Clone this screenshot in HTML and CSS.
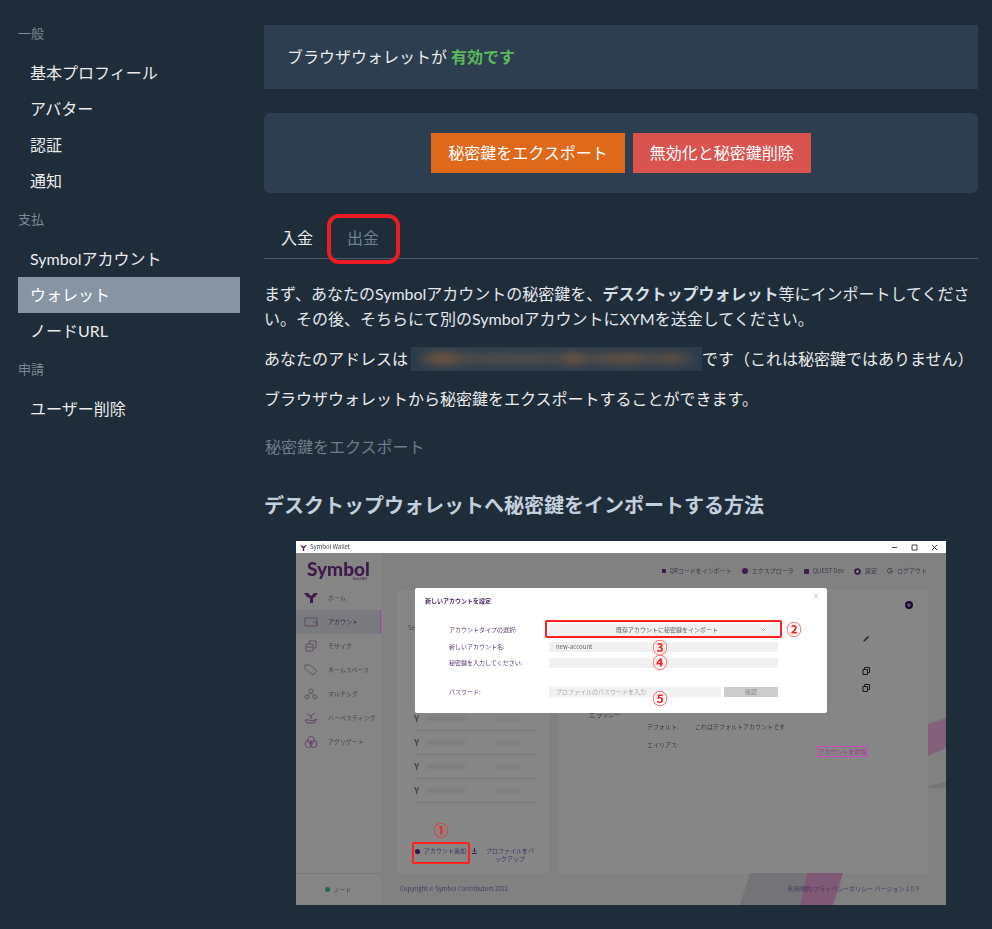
FILE: index.html
```html
<!DOCTYPE html>
<html lang="ja">
<head>
    <meta charset="UTF-8">
    <meta name="viewport" content="width=device-width, initial-scale=1.0">
    <title>ウォレット</title>
    <link rel="stylesheet" href="styles.css">
</head>
<body>
    <div class="page">
        <nav class="sidebar">
            <div class="nav-title">一般</div>
            <a class="nav-item">基本プロフィール</a>
            <a class="nav-item">アバター</a>
            <a class="nav-item">認証</a>
            <a class="nav-item">通知</a>
            <div class="nav-title">支払</div>
            <a class="nav-item">Symbolアカウント</a>
            <a class="nav-item active">ウォレット</a>
            <a class="nav-item">ノードURL</a>
            <div class="nav-title">申請</div>
            <a class="nav-item">ユーザー削除</a>
        </nav>

        <main class="content">
            <div class="panel status">ブラウザウォレットが <strong class="enabled">有効です</strong></div>
            <div class="panel actions">
                <button class="btn btn-orange">秘密鍵をエクスポート</button>
                <button class="btn btn-red">無効化と秘密鍵削除</button>
            </div>

            <div class="tabs">
                <a class="tab current">入金</a>
                <a class="tab marked">出金</a>
            </div>

            <p class="intro">まず、あなたのSymbolアカウントの秘密鍵を、<strong>デスクトップウォレット</strong>等にインポートしてください。その後、そちらにて別のSymbolアカウントにXYMを送金してください。</p>
            <p class="address-line">あなたのアドレスは<span class="address"><i></i></span>です（これは秘密鍵ではありません）</p>
            <p class="export-note">ブラウザウォレットから秘密鍵をエクスポートすることができます。</p>
            <a class="export-link">秘密鍵をエクスポート</a>

            <h2>デスクトップウォレットへ秘密鍵をインポートする方法</h2>

            <div class="shot">
                <div class="win-bar">
                    <span class="win-title"><svg width="7" height="7" viewBox="0 0 10 10"><path d="M0 1l3 1 2 2 2-2 3-1-3 4-1 1v4H4V6L3 5z" fill="#5a1a6a"/></svg>Symbol Wallet</span>
                    <span class="win-controls">
                        <svg width="7" height="7" viewBox="0 0 7 7"><path d="M1 3.5h5" stroke="#444"/></svg>
                        <svg width="7" height="7" viewBox="0 0 7 7"><path d="M1 1h5v5H1z" stroke="#444" fill="none"/></svg>
                        <svg width="7" height="7" viewBox="0 0 7 7"><path d="M1 1l5 5M6 1L1 6" stroke="#444"/></svg>
                    </span>
                </div>
                <div class="app">
                    <div class="app-side">
                        <div class="logo">Symbol<small>From NEM</small></div>
                        <div class="app-nav">
                            <div class="app-link"><svg width="14" height="12" viewBox="0 0 14 12"><path d="M0 1l4 0 3 3 3-3 4 0-3 4-2 1v5H6V6L3 5z" fill="#7a3590"/></svg>ホーム</div>
                            <div class="app-link on"><svg width="14" height="12" viewBox="0 0 14 12"><path d="M1 2h12v8H1zM9 6h4v3" stroke="#b090b8" fill="none"/></svg>アカウント</div>
                            <div class="app-link"><svg width="14" height="12" viewBox="0 0 14 12"><path d="M2 4h7v7H2zM2 7h7M5 4V1h7v7H9" stroke="#c090c8" fill="none"/></svg>モザイク</div>
                            <div class="app-link"><svg width="14" height="12" viewBox="0 0 14 12"><path d="M1 1h5l7 6-4 4-8-6z" stroke="#b8a8b8" fill="none"/></svg>ネームスペース</div>
                            <div class="app-link"><svg width="14" height="12" viewBox="0 0 14 12"><path d="M7 5L3 8M7 5l4 3" stroke="#b8a8b8"/><circle cx="7" cy="3" r="2" stroke="#b8a8b8" fill="none"/><circle cx="3" cy="9" r="2" stroke="#b8a8b8" fill="none"/><circle cx="11" cy="9" r="2" stroke="#b8a8b8" fill="none"/></svg>マルチシグ</div>
                            <div class="app-link"><svg width="14" height="12" viewBox="0 0 14 12"><path d="M1 8h4l3 1 5-2-3 4H3zM7 7V3M7 4l4-3M7 4L3 2" stroke="#c080c8" fill="none"/></svg>ハーベスティング</div>
                            <div class="app-link"><svg width="14" height="12" viewBox="0 0 14 12"><circle cx="7" cy="4" r="3.5" stroke="#d080c8" fill="none"/><circle cx="4.5" cy="8" r="3.5" stroke="#d080c8" fill="none"/><circle cx="9.5" cy="8" r="3.5" stroke="#d080c8" fill="none"/></svg>アグリゲート</div>
                        </div>
                        <div class="app-node"><i></i>ノード</div>
                    </div>
                    <div class="app-main">
                        <div class="app-top">
                            <span><svg width="4" height="4" viewBox="0 0 4 4"><rect width="4" height="4" fill="#7a3590"/></svg>QRコードをインポート</span>
                            <span><svg width="6" height="6" viewBox="0 0 6 6"><circle cx="3" cy="3" r="3" fill="#7a3590"/></svg>エクスプローラ</span>
                            <span><svg width="5" height="5" viewBox="0 0 5 5"><rect width="5" height="5" rx="1" fill="#7a3590"/></svg>QUEST Dev</span>
                            <span><svg width="7" height="7" viewBox="0 0 7 7"><circle cx="3.5" cy="3.5" r="2.4" stroke="#5a2a80" stroke-width="1.6" fill="none"/></svg>設定</span>
                            <span><svg width="6" height="6" viewBox="0 0 6 6"><path d="M5 1.2A2.5 2.5 0 1 0 5.5 3H3" stroke="#777" fill="none"/></svg>ログアウト</span>
                        </div>
                        <div class="app-cards">
                            <div class="accounts">
                                <div class="acct-head">マ</div>
                                <div class="acct-search">Se</div>
                                <div class="acct-list">
                                    <div class="acct-row"><b>Y</b><span></span><em></em></div>
                                    <div class="acct-row"><b>Y</b><span></span><em></em></div>
                                    <div class="acct-row"><b>Y</b><span></span><em></em></div>
                                    <div class="acct-row"><b>Y</b><span></span><em></em></div>
                                </div>
                                <div class="acct-foot">
                                    <span class="add"><svg width="5" height="5" viewBox="0 0 5 5"><circle cx="2.5" cy="2.5" r="2.5" fill="#5a2a80"/></svg>アカウント追加</span>
                                    <svg class="backup-icon" width="5" height="6" viewBox="0 0 5 6"><path d="M2.5 0v4M1 2.5l1.5 1.5L4 2.5M0 5.5h5" stroke="#5a4a90" fill="none"/></svg>
                                    <span class="backup">プロファイルをバックアップ</span>
                                </div>
                            </div>
                            <div class="detail">
                                <svg class="plus" width="8" height="8" viewBox="0 0 8 8"><circle cx="4" cy="4" r="4" fill="#3a1060"/><path d="M4 2v4M2 4h4" stroke="#ddd"/></svg>
                                <svg class="pencil" width="8" height="8" viewBox="0 0 8 8"><path d="M1 7l1-2 4-4 1 1-4 4z" fill="#444"/></svg>
                                <svg class="copy copy-one" width="8" height="8" viewBox="0 0 8 8"><path d="M1 2.500h4.500v5H1zM2.500 2.500V.5h5v5H5.500" stroke="#333" fill="none"/></svg>
                                <svg class="copy copy-two" width="8" height="8" viewBox="0 0 8 8"><path d="M1 2.500h4.500v5H1zM2.500 2.500V.5h5v5H5.500" stroke="#333" fill="none"/></svg>
                                <div class="detail-first">エ ラッシー</div>
                                <div class="detail-row"><span>デフォルト:</span>これはデフォルトアカウントです</div>
                                <div class="detail-row"><span>エイリアス:</span></div>
                                <div class="del-btn">アカウントを削除</div>
                            </div>
                        </div>
                        <div class="app-foot">
                            <span>Copyright © Symbol Contributors 2021</span>
                            <span class="foot-right">利用規約 プライバシーポリシー バージョン 1.0.9</span>
                        </div>
                    </div>
                    <svg class="deco deco-foot" width="110" height="32" viewBox="0 0 110 32"><path d="M10 0h57l-7 32H0z" fill="#dcdce2"/><path d="M67 0h36l-10 32H60z" fill="#f2a8e0"/></svg>
                    <svg class="deco deco-side" width="18" height="70" viewBox="0 0 18 70"><path d="M0 6L18 0v30L0 38z" fill="#f8b8e8"/><path d="M0 68l18-4v6H0z" fill="#ddd"/></svg>
                </div>
                <div class="dim"></div>

                <div class="modal">
                    <div class="modal-title">新しいアカウントを設定</div>
                    <div class="form">
                        <label>アカウントタイプの選択:</label>
                        <div class="field center">既存アカウントに秘密鍵をインポート<svg class="caret" width="5" height="3" viewBox="0 0 5 3"><path d="M.5.5l2 2 2-2" stroke="#999" fill="none"/></svg></div>
                        <label>新しいアカウント名:</label>
                        <div class="field">new-account</div>
                        <label>秘密鍵を入力してください:</label>
                        <div class="field"></div>
                        <label class="pw-label">パスワード:</label>
                        <div class="pw-row"><div class="field muted">プロファイルのパスワードを入力</div><div class="confirm">確認</div></div>
                    </div>
                    <span class="modal-close">×</span>
                </div>

                <span class="mark-box box-type"></span>
                <span class="mark-box box-add"></span>
                <span class="num n1">①</span>
                <span class="num n2">②</span>
                <span class="num n3">③</span>
                <span class="num n4">④</span>
                <span class="num n5">⑤</span>
            </div>
        </main>
    </div>
</body>
</html>
```
FILE: styles.css
```css
* {
    box-sizing: border-box;
}

body {
    margin: 0;
    background: #1f2d3b;
    color: #ebebeb;
    font-family: Lato, "Noto Sans CJK JP", sans-serif;
    font-size: 16px;
    line-height: 1.5;
    overflow: hidden;
}

.page {
    display: flex;
    height: 929px;
    padding: 25px 14px 0 18px;
    gap: 24px;
}

.sidebar {
    width: 222px;
    flex-shrink: 0;
    margin-top: -1px;
}

.nav-title {
    color: #7c8894;
    font-size: 13px;
    line-height: 18px;
    margin-bottom: 13px;
}

.nav-item {
    display: block;
    height: 36px;
    line-height: 36px;
    padding-left: 12px;
    color: #ebebeb;
}

.nav-item + .nav-title {
    margin-top: 11px;
}

.nav-item.active {
    background: #8694a4;
    color: #fff;
}

.content {
    flex: 1;
    min-width: 0;
}

.panel {
    background: #2c3e50;
}

.status {
    height: 64px;
    line-height: 64px;
    padding-left: 23px;
    margin-bottom: 24px;
}

.enabled {
    color: #5cb85c;
}

.actions {
    height: 80px;
    border-radius: 6px;
    display: flex;
    justify-content: center;
    align-items: center;
    gap: 8px;
    margin-bottom: 25px;
}

.btn {
    height: 40px;
    border: 0;
    padding: 0 17px;
    color: #fff;
    font: inherit;
}

.btn-orange {
    background: #df691a;
}

.btn-red {
    background: #d9534f;
}

.tabs {
    display: flex;
    gap: 2px;
    height: 41px;
    border-bottom: 1px solid #4e5d6c;
    padding-left: 1px;
    margin-bottom: 22px;
}

.tab {
    padding: 0 16px;
    line-height: 40px;
    position: relative;
}

.tab.marked {
    color: #6d8096;
}

.tab.marked::after {
    content: '';
    position: absolute;
    left: -4px;
    right: -5px;
    top: -4px;
    bottom: -6px;
    border: 4px solid #ed1c24;
    border-radius: 12px;
}

p {
    margin: 0 0 15px;
    line-height: 25px;
}

.intro {
    color: #e4e8ec;
}

.intro strong {
    color: #d5dde5;
}

.address-line {
    display: flex;
    align-items: center;
}

.address {
    width: 291px;
    height: 24px;
    margin: 0 0 0 3px;
    background: #2a3c4e;
    display: flex;
    align-items: center;
    overflow: hidden;
}

.address i {
    flex: 1;
    height: 13px;
    margin: 0 8px;
    filter: blur(4px);
    background: linear-gradient(90deg, #3d4449, #75553d 8%, #4b4a4a 18%, #504c49 40%, #49494a 50%, #70533f 56%, #4c4a4a 62%, #655040 76%, #4c4a4a 85%, #5f4e43 92%, #3a4249);
}

.export-link {
    display: block;
    color: #6e7b88;
    line-height: 24px;
    margin: 24px 0 0 1px;
}

h2 {
    margin: 31px 0 21px;
    font-size: 20px;
    line-height: 30px;
    color: #c3cfdc;
}

/* embedded screenshot of the desktop wallet */
.shot {
    position: relative;
    width: 650px;
    height: 364px;
    margin-left: 32px;
    background: #fff;
    overflow: hidden;
    filter: blur(0.7px);
    font-family: "Noto Sans CJK JP", sans-serif;
    font-size: 6px;
    line-height: 8px;
    color: #555;
}

.win-bar {
    height: 12px;
    background: #fff;
    display: flex;
    justify-content: space-between;
    align-items: center;
    padding: 0 8px 0 4px;
    color: #444;
}

.win-title {
    display: flex;
    align-items: center;
    gap: 3px;
}

.win-controls {
    display: flex;
    gap: 13px;
}

.app {
    position: relative;
    display: flex;
    height: 352px;
    color: #8a7c98;
}

.app-side {
    width: 85px;
    background: #fbfbfb;
    display: flex;
    flex-direction: column;
}

.logo {
    font-family: Lato, sans-serif;
    font-size: 19px;
    font-weight: 900;
    line-height: 17px;
    color: #7a3090;
    padding: 7px 0 0 11px;
    height: 33px;
}

.logo small {
    display: block;
    font-size: 3px;
    line-height: 3px;
    margin-top: 1px;
    text-align: right;
    padding-right: 14px;
    font-weight: 400;
}

.app-link {
    position: relative;
    height: 24px;
    display: flex;
    align-items: center;
    gap: 10px;
    padding-left: 8px;
}

.app-link.on {
    background: #e6e9f0;
    color: #6a4a80;
}

.app-link.on::after {
    content: '';
    position: absolute;
    right: 0;
    top: 0;
    bottom: 0;
    width: 1.5px;
    background: #b038c0;
    z-index: 2;
}

.app-nav {
    flex: 1;
}

.app-node {
    height: 32px;
    border-top: 1px solid #e5e5e8;
    display: flex;
    align-items: center;
    justify-content: center;
    gap: 3px;
}

.app-node i {
    width: 5px;
    height: 5px;
    border-radius: 50%;
    background: #3fbf7f;
}

.app-main {
    flex: 1;
    background: #f3f3f4;
    display: flex;
    flex-direction: column;
}

.app-top {
    height: 36px;
    display: flex;
    justify-content: flex-end;
    align-items: center;
    gap: 10px;
    padding-right: 19px;
    color: #7a6a8a;
}

.app-top span {
    display: flex;
    align-items: center;
    gap: 4px;
}

.app-cards {
    flex: 1;
    display: flex;
    gap: 10px;
    padding: 1px 18px 0 16px;
}

.accounts {
    width: 152px;
    height: 283px;
    padding: 1px 12px 0 17px;
    background: #fdfdfd;
    display: flex;
    flex-direction: column;
}

.acct-search {
    margin: 25px 0 0 -6px;
}

.acct-list {
    margin-top: 75px;
}

.acct-row {
    height: 24px;
    border-bottom: 1px solid #e5e5e8;
    display: flex;
    align-items: center;
    gap: 8px;
    color: #888;
}

.acct-row b {
    font-size: 9px;
}

.acct-row span {
    width: 38px;
    height: 5px;
    background: #eee;
    filter: blur(1px);
}

.acct-row em {
    width: 24px;
    height: 4px;
    margin-left: 24px;
    background: #f0f0f0;
    filter: blur(1px);
}

.acct-foot {
    margin-top: auto;
    margin-bottom: 10px;
    margin-left: 1px;
    display: flex;
    gap: 6px;
    color: #7a5cc0;
}

.add {
    display: flex;
    align-items: center;
    gap: 4px;
    height: 8px;
    white-space: nowrap;
}

.backup-icon {
    margin-top: 1px;
    flex-shrink: 0;
}

.backup {
    text-align: center;
    width: 56px;
}

.detail {
    flex: 1;
    height: 283px;
    background: #fdfdfd;
    padding: 121px 0 0 30px;
    position: relative;
    color: #7a6a80;
}

.plus {
    position: absolute;
    left: 346px;
    top: 11px;
}

.pencil {
    position: absolute;
    left: 303px;
    top: 45px;
}

.copy {
    position: absolute;
    left: 303px;
}

.copy-one {
    top: 77px;
}

.copy-two {
    top: 94px;
}

.detail-first {
    height: 7px;
    line-height: 7px;
}

.detail-row {
    display: flex;
    height: 18px;
    line-height: 18px;
    margin-left: 58px;
}

.detail-row span {
    width: 48px;
}

.del-btn {
    position: absolute;
    top: 156px;
    left: 258px;
    width: 51px;
    height: 11px;
    border: 1px solid #c848c0;
    color: #a83098;
    text-align: center;
    line-height: 9px;
    z-index: 2;
}

.app-foot {
    height: 32px;
    display: flex;
    justify-content: space-between;
    align-items: center;
    padding: 0 27px 0 19px;
}

.app-foot span {
    position: relative;
    z-index: 2;
    color: #4a3a60;
}

.deco {
    position: absolute;
}

.deco-foot {
    left: 444px;
    bottom: 0;
}

.deco-side {
    right: 0;
    top: 165px;
}

.dim {
    position: absolute;
    left: 0;
    right: 0;
    top: 12px;
    bottom: 0;
    background: rgba(0, 0, 0, 0.47);
    z-index: 1;
}

.modal {
    position: absolute;
    z-index: 3;
    left: 119px;
    top: 47px;
    width: 412px;
    height: 125px;
    background: #fff;
    border-radius: 2px;
    padding: 8px 49px 0 10px;
    color: #5a3a70;
}

.modal-title {
    font-weight: 700;
    line-height: 9px;
    color: #4a2a60;
    margin-bottom: 19px;
}

.modal-close {
    position: absolute;
    top: 4px;
    right: 7px;
    font-size: 8px;
    color: #bbb;
}

.form {
    display: grid;
    grid-template-columns: 100px 1fr;
    row-gap: 6px;
    padding-left: 24px;
    align-items: center;
}

.field {
    position: relative;
    height: 10px;
    line-height: 10px;
    background: #f1f1f1;
    padding-left: 7px;
    color: #666;
}

.field.center {
    height: 12px;
    line-height: 12px;
    text-align: center;
}

.caret {
    position: absolute;
    right: 12px;
    top: 4px;
}

.pw-label {
    margin-top: 13px;
}

.pw-row {
    display: flex;
    gap: 3px;
    margin-top: 13px;
}

.pw-row .field {
    flex: 1;
    color: #aaa;
}

.confirm {
    width: 54px;
    height: 10px;
    background: #ccc;
    text-align: center;
    line-height: 10px;
    color: #888;
}

.mark-box {
    position: absolute;
    z-index: 4;
    border: 2px solid #ff2020;
    border-radius: 2px;
}

.box-type {
    left: 249px;
    top: 79px;
    width: 237px;
    height: 18px;
}

.box-add {
    left: 116px;
    top: 301px;
    width: 58px;
    height: 22px;
}

.num {
    position: absolute;
    z-index: 4;
    width: 16px;
    text-align: center;
    font-size: 15px;
    font-weight: 700;
    line-height: 16px;
    color: #ff2020;
    text-shadow: 0 0 2px #fff;
}

.n1 { left: 137px; top: 281px; text-shadow: none; }
.n2 { left: 490px; top: 80px; }
.n3 { left: 356px; top: 98px; }
.n4 { left: 356px; top: 113px; }
.n5 { left: 356px; top: 149px; }
```
